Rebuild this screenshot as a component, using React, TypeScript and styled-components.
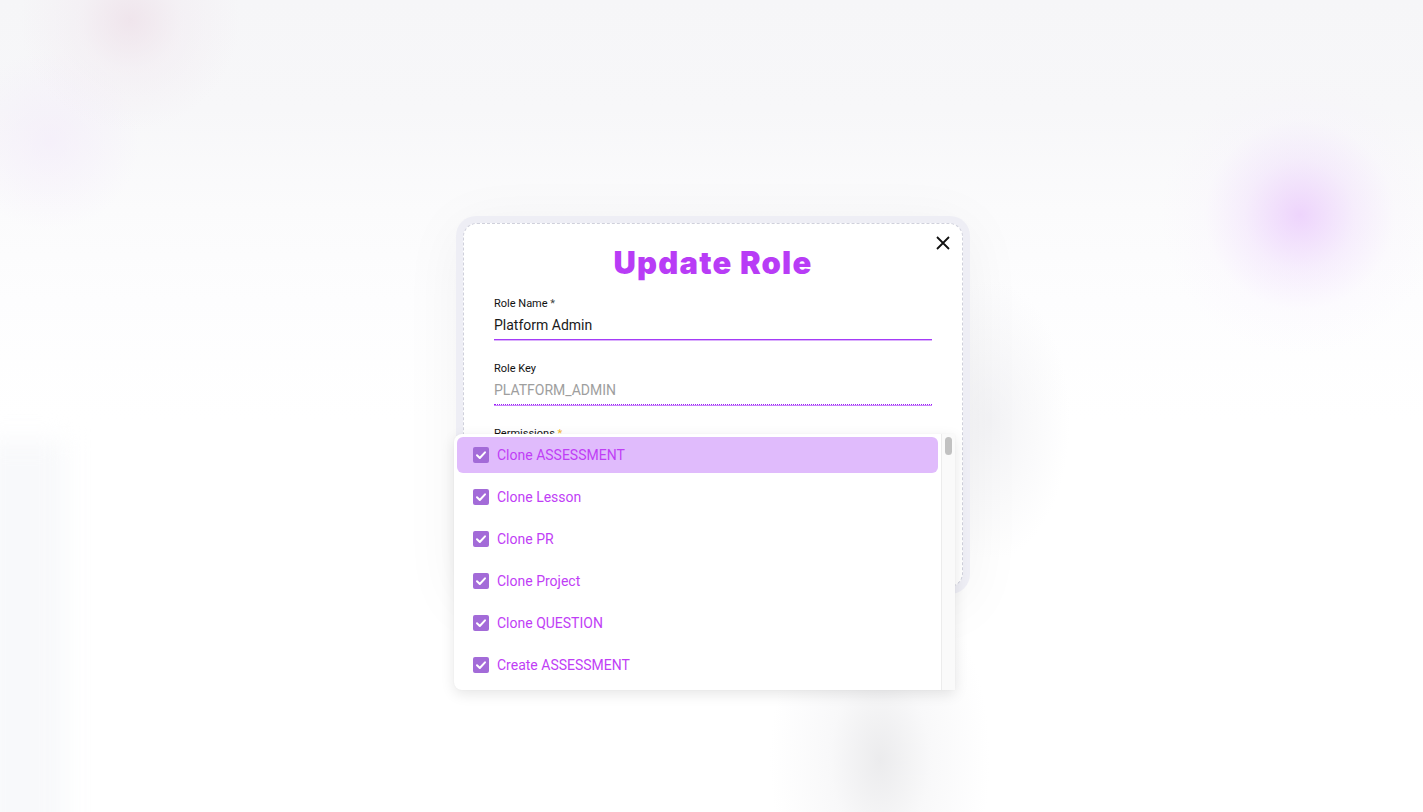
import React from "react";
import styled, { createGlobalStyle } from "styled-components";

const permissions = [
  "Clone ASSESSMENT",
  "Clone Lesson",
  "Clone PR",
  "Clone Project",
  "Clone QUESTION",
  "Create ASSESSMENT",
];

function CheckIcon() {
  return (
    <svg width="16" height="16" viewBox="0 0 16 16">
      <rect x="0" y="0" width="16" height="16" rx="2" fill="#a36bd8" />
      <path
        d="M4 8.3 L6.8 11 L12 5.3"
        stroke="#ffffff"
        strokeWidth="2"
        fill="none"
        strokeLinecap="round"
        strokeLinejoin="round"
      />
    </svg>
  );
}

function App() {
  return (
    <>
      <GlobalStyle />
      <Page>
        <Modal>
          <Card>
            <CloseButton aria-label="close">
              <svg width="14" height="14" viewBox="0 0 14 14">
                <path d="M1 1 L13 13 M13 1 L1 13" stroke="#111" strokeWidth="1.8" />
              </svg>
            </CloseButton>
            <Title>Update Role</Title>
            <Field>
              <Label>
                Role Name <Star>*</Star>
              </Label>
              <Value>Platform Admin</Value>
            </Field>
            <Field>
              <Label>Role Key</Label>
              <Value disabled>PLATFORM_ADMIN</Value>
            </Field>
            <Field>
              <Label>
                Permissions <Star warn>*</Star>
              </Label>
            </Field>
          </Card>

          <Menu>
            <List>
              {permissions.map((p, i) => (
                <Item key={p} active={i === 0}>
                  <CheckIcon />
                  <ItemText>{p}</ItemText>
                </Item>
              ))}
            </List>
            <Track>
              <Thumb />
            </Track>
          </Menu>
        </Modal>
      </Page>
    </>
  );
}

const GlobalStyle = createGlobalStyle`
  html, body {
    margin: 0;
    padding: 0;
  }
  body {
    font-family: Roboto, "Liberation Sans", sans-serif;
  }
`;

const Page = styled.div`
  position: relative;
  width: 100vw;
  height: 100vh;
  overflow: hidden;
  display: flex;
  align-items: center;
  justify-content: center;
  background:
    radial-gradient(circle at 1300px 215px, rgba(232, 196, 252, 0.7) 0, rgba(236, 212, 252, 0.35) 55px, rgba(246, 236, 254, 0.15) 95px, rgba(255, 255, 255, 0) 140px),
    radial-gradient(circle at 130px 20px, rgba(236, 220, 230, 0.65) 0, rgba(240, 230, 238, 0.35) 50px, rgba(255, 255, 255, 0) 110px),
    radial-gradient(circle at 50px 140px, rgba(242, 232, 250, 0.5) 0, rgba(255, 255, 255, 0) 90px),
    radial-gradient(ellipse 110px 190px at 880px 760px, rgba(232, 232, 234, 0.85) 0, rgba(242, 242, 244, 0.5) 45%, rgba(255, 255, 255, 0) 100%),
    radial-gradient(ellipse 80px 140px at 990px 420px, rgba(236, 236, 240, 0.6) 0, rgba(255, 255, 255, 0) 100%),
    linear-gradient(180deg, #f6f6f8 0, #f7f7f9 110px, #fbfbfc 210px, #fdfdfe 300px, #ffffff 420px);

  /* faint blurred strip of the page behind, left edge */
  &::before {
    content: "";
    position: absolute;
    left: -20px;
    top: 440px;
    width: 85px;
    height: 420px;
    background: #f8f9fb;
    filter: blur(12px);
  }
`;

const Modal = styled.div`
  position: relative;
  z-index: 1;
  width: 514px;
  height: 378px;
  box-sizing: border-box;
  padding: 7px;
  margin: -2px 0 0 3px;
  background: #eeeef5;
  border-radius: 20px;
  box-shadow: 0 10px 60px rgba(0, 0, 0, 0.05);
`;

const Card = styled.div`
  position: relative;
  height: 100%;
  box-sizing: border-box;
  background: #ffffff;
  border: 1px dashed #d0d1dc;
  border-radius: 14px;
  padding: 17px 30px 0;
  overflow: hidden;
`;

const CloseButton = styled.button`
  position: absolute;
  top: 12px;
  right: 12px;
  width: 14px;
  height: 14px;
  padding: 0;
  border: none;
  background: none;
  display: flex;
`;

const Title = styled.h2`
  margin: 0 0 12px;
  text-align: center;
  font-family: Inter, "Noto Sans", sans-serif;
  font-weight: 900;
  font-size: 31px;
  line-height: 44px;
  letter-spacing: 1.2px;
  color: #b83cf6;
`;

const Field = styled.div`
  display: flex;
  flex-direction: column;
  margin-bottom: 22px;
`;

const Label = styled.label`
  font-size: 11px;
  line-height: 14px;
  color: #111111;
`;

const Star = styled.span<{ warn?: boolean }>`
  color: ${(p) => (p.warn ? "#f5b82e" : "#444")};
`;

const Value = styled.div<{ disabled?: boolean }>`
  margin-top: 4px;
  font-size: 14px;
  line-height: 21px;
  padding-bottom: 3px;
  color: ${(p) => (p.disabled ? "#9e9e9e" : "#1a1a1a")};
  border-bottom: 1px ${(p) => (p.disabled ? "dotted #9a1ef7" : "solid #a53cf7")};
  box-shadow: 0 1px 0 ${(p) => (p.disabled ? "rgba(154, 30, 247, 0.55)" : "rgba(165, 60, 247, 0.4)")};
`;

const Menu = styled.div`
  position: absolute;
  left: -2px;
  top: 218px;
  width: 501px;
  height: 256px;
  display: flex;
  background: #ffffff;
  border-radius: 8px 0 0 8px;
  box-shadow: 0 4px 14px rgba(0, 0, 0, 0.1), 0 0 2px rgba(0, 0, 0, 0.04);
  overflow: hidden;
`;

const List = styled.div`
  flex: 1;
  padding: 3px 3px 0;
  display: flex;
  flex-direction: column;
  gap: 6px;
`;

const Item = styled.div<{ active?: boolean }>`
  height: 36px;
  flex-shrink: 0;
  display: flex;
  align-items: center;
  gap: 8px;
  padding-left: 16px;
  border-radius: 6px;
  background: ${(p) => (p.active ? "#e0bbfc" : "transparent")};
`;

const ItemText = styled.span`
  font-size: 14px;
  color: #bf3ef6;
`;

const Track = styled.div`
  width: 14px;
  box-sizing: border-box;
  padding: 3px 3px 0;
  background: #fafafa;
  border-left: 1px solid #ececec;
`;

const Thumb = styled.div`
  width: 7px;
  height: 18px;
  border-radius: 4px;
  background: #c1c1c1;
`;

export default App;
